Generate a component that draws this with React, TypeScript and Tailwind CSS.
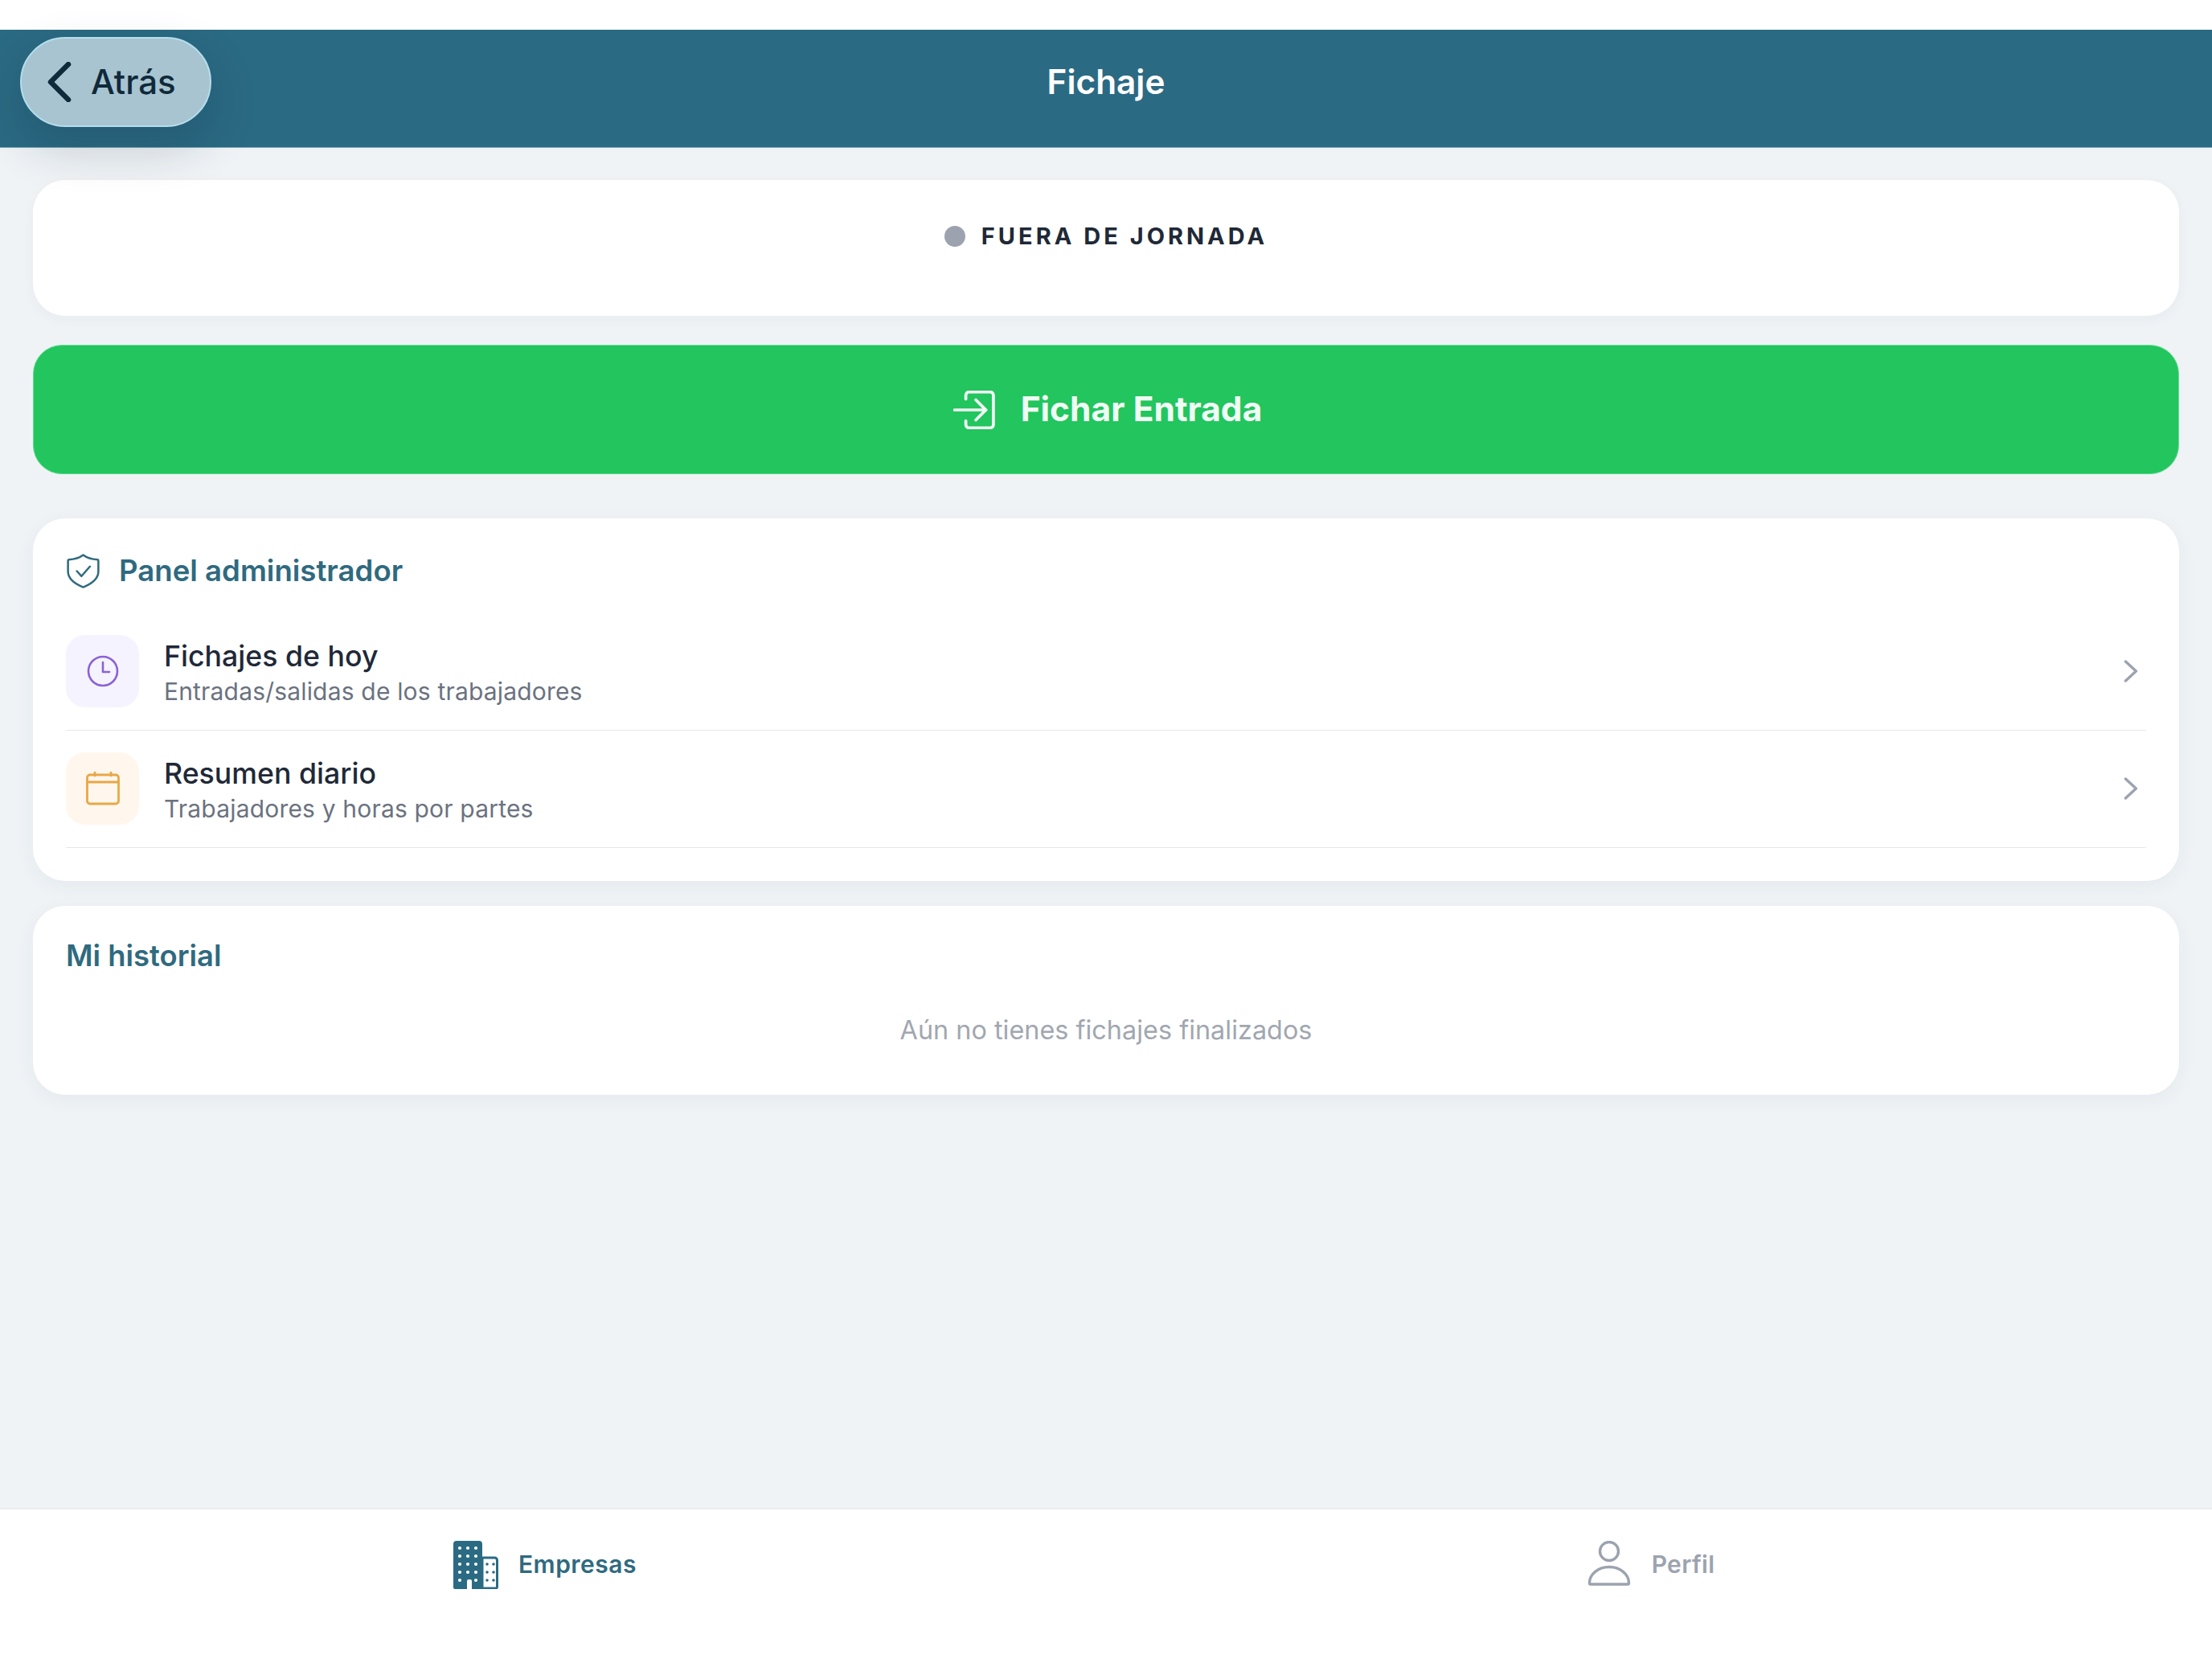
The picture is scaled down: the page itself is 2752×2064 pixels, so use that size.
import React from "react";

function BuildingIcon() {
  const big: [number, number][] = [];
  for (const y of [9, 19, 29, 39, 49]) for (const x of [8, 18, 28]) {
    if (y === 49 && x === 18) continue;
    big.push([x, y]);
  }
  const small: [number, number][] = [];
  for (const y of [29, 39, 49]) for (const x of [42, 50]) small.push([x, y]);
  return (
    <svg viewBox="0 0 56 60" className="w-[56px] h-[60px]">
      <path d="M36 21h15.500a3 3 0 0 1 3 3v33.500a1.500 1.500 0 0 1-1.500 1.500H36V21z" fill="#ffffff" stroke="#2b6a83" strokeWidth="3" />
      <path d="M4 0h28a4 4 0 0 1 4 4v56H23V50a2 2 0 0 0-2-2h-2a2 2 0 0 0-2 2v10H2a2 2 0 0 1-2-2V4a4 4 0 0 1 4-4z" fill="#2b6a83" />
      {big.map(([x, y]) => (
        <circle key={`b${x}-${y}`} cx={x} cy={y} r="2.100" fill="#ffffff" />
      ))}
      {small.map(([x, y]) => (
        <circle key={`s${x}-${y}`} cx={x} cy={y} r="1.800" fill="#2b6a83" />
      ))}
    </svg>
  );
}

function UserIcon() {
  return (
    <svg viewBox="0 0 54 56" fill="none" stroke="#9ca3af" strokeWidth="3.400" className="w-[54px] h-[56px]">
      <circle cx="27" cy="13" r="11.500" />
      <path d="M2.500 52.500c0-11 11-20 24.500-20s24.500 9 24.500 20c0 1-.5 1.500-1.500 1.500H4c-1 0-1.500-.5-1.500-1.500z" strokeLinejoin="round" />
    </svg>
  );
}

function EnterIcon() {
  return (
    <svg viewBox="0 0 50 46" fill="none" stroke="#f0fdf4" strokeWidth="3.600" strokeLinecap="round" strokeLinejoin="round" className="w-[52px] h-[48px]">
      <path d="M15 10V5.500A4 4 0 0 1 19 1.500h25a4 4 0 0 1 4 4v35a4 4 0 0 1-4 4H19a4 4 0 0 1-4-4V36" />
      <path d="M1.500 23H39" />
      <path d="M27 11l12 12-12 12" />
    </svg>
  );
}

function ShieldIcon() {
  return (
    <svg viewBox="0 0 40 41" fill="none" stroke="#2f6a7f" strokeWidth="2.400" strokeLinecap="round" strokeLinejoin="round" className="w-[43px] h-[43px]">
      <path d="M20 1.500c4 3 9 5 17 5.500.6 0 1 .4 1 1v13c0 9-8 14.500-17.500 18.500a1.500 1.500 0 0 1-1 0C10 35.500 2 30 2 21V8c0-.6.4-1 1-1 8-.5 13-2.500 17-5.500z" />
      <path d="M12.500 20.500l5.500 6 10-11.500" />
    </svg>
  );
}

function ClockIcon() {
  return (
    <svg viewBox="0 0 40 40" fill="none" stroke="#8b62d6" strokeWidth="2.600" strokeLinecap="round" strokeLinejoin="round" className="w-[40px] h-[40px]">
      <circle cx="20" cy="20" r="18" />
      <path d="M20 9v12h8" />
    </svg>
  );
}

function CalendarIcon() {
  return (
    <svg viewBox="0 0 42 42" fill="none" stroke="#e8a847" strokeWidth="2.800" strokeLinecap="round" strokeLinejoin="round" className="w-[42px] h-[42px]">
      <rect x="1.500" y="4" width="39" height="36" rx="3.500" />
      <path d="M1.500 13h39" />
      <path d="M11 1v4M31 1v4" />
    </svg>
  );
}

function Chevron() {
  return (
    <svg viewBox="0 0 18 28" fill="none" stroke="#9ca3af" strokeWidth="3.400" strokeLinecap="round" strokeLinejoin="round" className="w-[18px] h-[28px]">
      <path d="M2.500 2l13 12-13 12" />
    </svg>
  );
}

function Row({ icon, box, title, sub }: { icon: React.ReactNode; box: string; title: string; sub: string }) {
  return (
    <div className="flex items-center pt-[27px] pb-[28px] border-b-[1.5px] border-[#e5e7eb]">
      <div className={`w-[91px] h-[90px] rounded-[24px] flex items-center justify-center shrink-0 ${box}`}>{icon}</div>
      <div className="ml-[31px] flex-1 h-[90px] flex flex-col pt-[4px]">
        <div className="text-[35.700px] leading-[44px] font-medium text-[#1f2937]">{title}</div>
        <div className="mt-[2px] text-[30px] leading-[40px] text-[#6b7280] tracking-[0.18px]">{sub}</div>
      </div>
      <div className="mr-[10px]">
        <Chevron />
      </div>
    </div>
  );
}

export default function App() {
  return (
    <div className="w-[2752px] h-[2064px] flex flex-col bg-[#eff3f6] font-['Inter',sans-serif] overflow-hidden">
      <div className="h-[37px] bg-white shrink-0" />
      <header className="relative h-[147px] shrink-0 bg-[#2b6a83] border-b border-[#7fa8b8] flex items-center justify-center pb-[15px]">
        <button className="absolute left-[25px] top-[9px] z-10 w-[238px] h-[112px] rounded-full bg-[#a8c4d0] border-2 border-[#b4deec] shadow-[0_24px_60px_rgba(10,30,50,0.2)] flex items-center pl-[32px] gap-[24px]">
          <svg viewBox="0 0 30 50" fill="none" stroke="#0f2a3a" strokeWidth="6.500" strokeLinecap="round" strokeLinejoin="round" className="w-[30px] h-[50px]">
            <path d="M26 3L4 25l22 22" />
          </svg>
          <span className="text-[42px] font-medium text-[#0f2a3a] leading-none">Atrás</span>
        </button>
        <h1 className="text-[42.300px] font-semibold text-white leading-none">Fichaje</h1>
      </header>

      <main className="flex-1 px-[41px] pt-[40px] flex flex-col">
        <section className="h-[169px] rounded-[40px] bg-white shadow-[0_4px_16px_rgba(30,50,70,0.04)] pt-[54px] flex justify-center items-start gap-[20px]">
          <span className="w-[26px] h-[26px] mt-[3px] rounded-full bg-[#9ca3af]" />
          <span className="text-[29px] leading-[32px] font-bold tracking-[4px] text-[#1f2937]">FUERA DE JORNADA</span>
        </section>

        <button className="mt-[36px] h-[161px] rounded-[36px] bg-[#22c55e] border border-[#5fdc8e] flex items-center justify-center gap-[32px] pl-[4px]">
          <EnterIcon />
          <span className="text-[42.500px] font-bold text-[#f0fdf4] leading-none">Fichar Entrada</span>
        </button>

        <section className="mt-[55px] h-[451px] rounded-[40px] bg-white shadow-[0_6px_24px_rgba(30,50,70,0.05)] px-[41px] pt-[41px]">
          <div className="h-[48px] mb-[29px] flex items-center gap-[23px]">
            <ShieldIcon />
            <h2 className="text-[36.600px] font-semibold text-[#2f6a7f] leading-none">Panel administrador</h2>
          </div>
          <Row icon={<ClockIcon />} box="bg-[#f5f3ff]" title="Fichajes de hoy" sub="Entradas/salidas de los trabajadores" />
          <Row icon={<CalendarIcon />} box="bg-[#fff7ed]" title="Resumen diario" sub="Trabajadores y horas por partes" />
        </section>

        <section className="mt-[31px] h-[235px] rounded-[40px] bg-white shadow-[0_6px_24px_rgba(30,50,70,0.05)] px-[41px] pt-[40px]">
          <h2 className="h-[44px] flex items-center text-[36.400px] font-semibold text-[#2f6a7f] leading-none">Mi historial</h2>
          <p className="mt-[51px] text-center text-[32.400px] leading-[40px] text-[#a1a7b0]">Aún no tienes fichajes finalizados</p>
        </section>
      </main>

      <nav className="h-[188px] shrink-0 bg-white border-t-2 border-[#e8ecf0] grid grid-cols-2 pt-[39px]">
        <div className="flex justify-center items-start gap-[25px] pr-[20px]">
          <BuildingIcon />
          <span className="mt-[11px] text-[30px] leading-[36px] font-semibold text-[#2f6a7f] tracking-[0.5px]">Empresas</span>
        </div>
        <div className="flex justify-center items-start gap-[26px] pr-[20px]">
          <UserIcon />
          <span className="mt-[11px] text-[30px] leading-[36px] font-semibold text-[#9ca3af] tracking-[0.3px]">Perfil</span>
        </div>
      </nav>
    </div>
  );
}
